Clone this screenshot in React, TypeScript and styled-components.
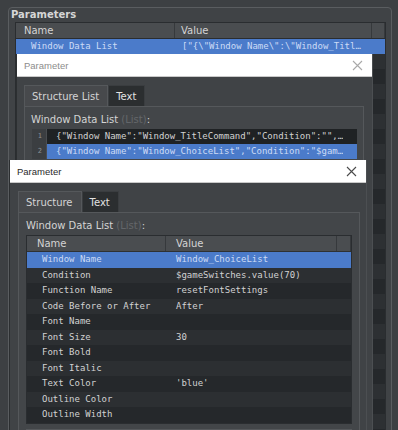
import styled, { createGlobalStyle } from "styled-components";

const GlobalStyle = createGlobalStyle`
  html, body {
    margin: 0;
    padding: 0;
    background: #3d4043;
  }
  body {
    font-family: "DejaVu Sans", sans-serif;
    color: #d2d2d2;
  }
`;

const Screen = styled.div`
  position: relative;
  width: 398px;
  height: 430px;
  overflow: hidden;
  background: #3d4043;
  padding: 7px 6px 0 8px;
  box-sizing: border-box;
`;

const GroupBox = styled.div`
  border: 1px solid #5a5d60;
  border-radius: 4px;
  height: 460px;
  background: #404346;
`;

const GroupTitle = styled.div`
  height: 14px;
  padding-left: 2px;
  font-size: 10px;
  font-weight: bold;
  line-height: 13px;
  color: #d6d6d6;
`;

const MainTable = styled.div`
  margin: 0 5px 0 6px;
  border: 1px solid #2a2d30;
  background: #27292c;
`;

const MainHeader = styled.div`
  display: grid;
  grid-template-columns: 159px 1fr 13px;
  height: 15px;
  background: #4a4d50;
  border-bottom: 1px solid #2a2d30;
`;

const HeadCell = styled.div<{ $pad: number }>`
  padding-left: ${(p) => p.$pad}px;
  font-size: 10px;
  line-height: 15px;
  color: #d4d4d4;
  border-right: 1px solid #36393c;
  white-space: nowrap;
  overflow: hidden;
`;

const MainRow = styled.div<{ $selected?: boolean; $odd?: boolean }>`
  display: grid;
  grid-template-columns: 159px 1fr;
  height: 15px;
  background: ${(p) => (p.$selected ? "#4b7bca" : p.$odd ? "#2d3033" : "#25282b")};
`;

const MonoCell = styled.div<{ $pad: number; $selected?: boolean }>`
  padding-left: ${(p) => p.$pad}px;
  font-family: "DejaVu Sans Mono", monospace;
  font-size: 9px;
  line-height: 15.5px;
  color: ${(p) => (p.$selected ? "#cddcf6" : "#d2d2d2")};
  white-space: nowrap;
  overflow: hidden;
`;

const Dialog = styled.div<{ $left: number; $top: number; $width: number }>`
  position: absolute;
  left: ${(p) => p.$left}px;
  top: ${(p) => p.$top}px;
  width: ${(p) => p.$width}px;
  bottom: -20px;
  display: flex;
  flex-direction: column;
  background: #404346;
  box-shadow: 1px 0 0 #4c4f52, -1px 0 0 #2c2f31;
`;

const TitleBar = styled.div<{ $active?: boolean }>`
  flex: none;
  display: flex;
  align-items: center;
  justify-content: space-between;
  height: 22px;
  padding: 0 9px 0 7px;
  background: #ffffff;
  border-bottom: 1px solid #c9c9c9;
  font-family: "Liberation Sans", Arial, sans-serif;
  font-size: 9.5px;
  color: ${(p) => (p.$active ? "#2a2a2a" : "#8c8c8c")};
`;

const CloseIcon = ({ color }: { color: string }) => (
  <svg width="11" height="11" viewBox="0 0 11 11">
    <path d="M1 1 L10 10 M10 1 L1 10" stroke={color} strokeWidth="1.1" fill="none" />
  </svg>
);

const DialogBody = styled.div<{ $padRight: number; $padLeft: number }>`
  flex: 1;
  min-height: 0;
  display: flex;
  flex-direction: column;
  padding: 8px ${(p) => p.$padRight}px 0 ${(p) => p.$padLeft}px;
`;

const TabStrip = styled.div`
  flex: none;
  display: flex;
  height: 21px;
`;

const Tab = styled.div<{ $active?: boolean }>`
  padding: 0 8px 0 7px;
  font-size: 10px;
  line-height: 21px;
  color: ${(p) => (p.$active ? "#d4d4d4" : "#e2e2e2")};
  background: ${(p) => (p.$active ? "#47494c" : "#2b2e30")};
  border: 1px solid ${(p) => (p.$active ? "#55585b" : "#3a3d40")};
  border-bottom: none;
  box-sizing: border-box;
`;

const Panel = styled.div<{ $pad: number }>`
  flex: 1;
  min-height: 0;
  overflow: hidden;
  border: 1px solid #55585b;
  background: #434649;
  padding: 6px ${(p) => p.$pad}px 0;
`;

const FieldLabel = styled.div`
  font-size: 10px;
  line-height: 13px;
  color: #d4d4d4;
  margin-bottom: 3px;
`;

const Dim = styled.span`
  color: #63666a;
`;

const CodeList = styled.div`
  margin-left: 1px;
  background: #1f2224;
`;

const CodeRow = styled.div<{ $selected?: boolean }>`
  display: flex;
  height: 15px;
  background: ${(p) => (p.$selected ? "#4b7bca" : "#1f2224")};
`;

const Gutter = styled.div`
  width: 15px;
  flex: none;
  padding-right: 4px;
  box-sizing: border-box;
  text-align: right;
  background: #3b3e41;
  border-right: 1px solid #4a4d50;
  font-family: "DejaVu Sans Mono", monospace;
  font-size: 7px;
  line-height: 15px;
  color: #8d9093;
`;

const ParamTable = styled.div`
  border: 1px solid #2a2d30;
  background: #25282b;
`;

const ParamHeader = styled.div`
  display: grid;
  grid-template-columns: 139px 1fr 14px;
  height: 16px;
  background: #4a4d50;
  border-bottom: 1px solid #2e3133;
  box-sizing: border-box;
`;

const ParamRow = styled.div<{ $selected?: boolean; $odd?: boolean }>`
  display: grid;
  grid-template-columns: 139px 1fr;
  height: 15.5px;
  background: ${(p) => (p.$selected ? "#4b7bca" : p.$odd ? "#2c2f32" : "#25282b")};
`;

const NextBox = styled.div`
  margin-top: 5px;
  height: 40px;
  border-top: 1px solid #55585b;
  background: #3a3d40;
`;

const mainRows = 26;

const fields: [string, string][] = [
  ["Window Name", "Window_ChoiceList"],
  ["Condition", "$gameSwitches.value(70)"],
  ["Function Name", "resetFontSettings"],
  ["Code Before or After", "After"],
  ["Font Name", ""],
  ["Font Size", "30"],
  ["Font Bold", ""],
  ["Font Italic", ""],
  ["Text Color", "'blue'"],
  ["Outline Color", ""],
  ["Outline Width", ""],
];

export default function App() {
  return (
    <>
      <GlobalStyle />
      <Screen>
        <GroupBox>
          <GroupTitle>Parameters</GroupTitle>
          <MainTable>
            <MainHeader>
              <HeadCell $pad={8}>Name</HeadCell>
              <HeadCell $pad={6}>Value</HeadCell>
              <HeadCell $pad={0} />
            </MainHeader>
            <MainRow $selected>
              <MonoCell $pad={15} $selected>Window Data List</MonoCell>
              <MonoCell $pad={7} $selected>
                {'["{\\"Window Name\\":\\"Window_Titl…'}
              </MonoCell>
            </MainRow>
            {Array.from({ length: mainRows }).map((_, i) => (
              <MainRow key={i} $odd={i % 2 === 0} />
            ))}
          </MainTable>
        </GroupBox>

        <Dialog $left={17} $top={54} $width={355}>
          <TitleBar>
            <span>Parameter</span>
            <CloseIcon color="#a9a9a9" />
          </TitleBar>
          <DialogBody $padLeft={7} $padRight={8}>
            <TabStrip>
              <Tab $active>Structure List</Tab>
              <Tab>Text</Tab>
            </TabStrip>
            <Panel $pad={6}>
              <FieldLabel>
                Window Data List <Dim>(List)</Dim>:
              </FieldLabel>
              <CodeList>
                <CodeRow>
                  <Gutter>1</Gutter>
                  <MonoCell $pad={9}>
                    {'{"Window Name":"Window_TitleCommand","Condition":"",…'}
                  </MonoCell>
                </CodeRow>
                <CodeRow $selected>
                  <Gutter>2</Gutter>
                  <MonoCell $pad={9} $selected>
                    {'{"Window Name":"Window_ChoiceList","Condition":"$gam…'}
                  </MonoCell>
                </CodeRow>
              </CodeList>
            </Panel>
          </DialogBody>
        </Dialog>

        <Dialog $left={10} $top={160} $width={356}>
          <TitleBar $active>
            <span>Parameter</span>
            <CloseIcon color="#4a4a4a" />
          </TitleBar>
          <DialogBody $padLeft={8} $padRight={6}>
            <TabStrip>
              <Tab $active>Structure</Tab>
              <Tab>Text</Tab>
            </TabStrip>
            <Panel $pad={7}>
              <FieldLabel>
                Window Data List <Dim>(List)</Dim>:
              </FieldLabel>
              <ParamTable>
                <ParamHeader>
                  <HeadCell $pad={10}>Name</HeadCell>
                  <HeadCell $pad={10}>Value</HeadCell>
                  <HeadCell $pad={0} />
                </ParamHeader>
                {fields.map(([name, value], i) => (
                  <ParamRow key={name} $selected={i === 0} $odd={i % 2 === 1}>
                    <MonoCell $pad={15} $selected={i === 0}>{name}</MonoCell>
                    <MonoCell $pad={10} $selected={i === 0}>{value}</MonoCell>
                  </ParamRow>
                ))}
              </ParamTable>
              <NextBox />
            </Panel>
          </DialogBody>
        </Dialog>
      </Screen>
    </>
  );
}
